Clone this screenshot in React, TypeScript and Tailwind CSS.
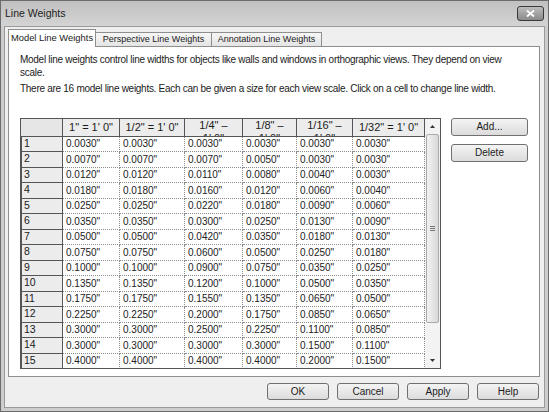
import React from "react";

const cols = [
  { w: "w-[57px]", label: ['1" = 1\' 0"'] },
  { w: "w-[65px]", label: ['1/2" = 1\' 0"'] },
  { w: "w-[58px]", label: ['1/4" –', '1\' 0"'] },
  { w: "w-[54px]", label: ['1/8" –', '1\' 0"'] },
  { w: "w-[56px]", label: ['1/16" –', '1\' 0"'] },
  { w: "w-[72px]", label: ['1/32" = 1\' 0"'] },
];

const rows = [
  ["0.0030", "0.0030", "0.0030", "0.0030", "0.0030", "0.0030"],
  ["0.0070", "0.0070", "0.0070", "0.0050", "0.0030", "0.0030"],
  ["0.0120", "0.0120", "0.0110", "0.0080", "0.0040", "0.0030"],
  ["0.0180", "0.0180", "0.0160", "0.0120", "0.0060", "0.0040"],
  ["0.0250", "0.0250", "0.0220", "0.0180", "0.0090", "0.0060"],
  ["0.0350", "0.0350", "0.0300", "0.0250", "0.0130", "0.0090"],
  ["0.0500", "0.0500", "0.0420", "0.0350", "0.0180", "0.0130"],
  ["0.0750", "0.0750", "0.0600", "0.0500", "0.0250", "0.0180"],
  ["0.1000", "0.1000", "0.0900", "0.0750", "0.0350", "0.0250"],
  ["0.1350", "0.1350", "0.1200", "0.1000", "0.0500", "0.0350"],
  ["0.1750", "0.1750", "0.1550", "0.1350", "0.0650", "0.0500"],
  ["0.2250", "0.2250", "0.2000", "0.1750", "0.0850", "0.0650"],
  ["0.3000", "0.3000", "0.2500", "0.2250", "0.1100", "0.0850"],
  ["0.3000", "0.3000", "0.3000", "0.3000", "0.1500", "0.1100"],
  ["0.4000", "0.4000", "0.4000", "0.4000", "0.2000", "0.1500"],
];

function Btn({ children, className = "" }: { children: React.ReactNode; className?: string }) {
  return (
    <button
      className={
        "flex items-center justify-center rounded-[3px] border border-[#707070] bg-gradient-to-b from-[#f4f4f4] to-[#dcdcdc] text-[10px] text-[#1b1b1b] " +
        className
      }
    >
      {children}
    </button>
  );
}

export default function App() {
  return (
    <div className="flex h-[412px] w-[549px] flex-col border border-[#6b6b6b] bg-[#cdcdcd] font-['Liberation_Sans',Arial,sans-serif] text-[#1b1b1b]">
      {/* title bar */}
      <div className="flex h-[25px] items-center justify-between bg-gradient-to-b from-[#c0c0c0] to-[#d4d4d4] pl-[4px] pr-[4px]">
        <span className="text-[10.5px] text-[#222]">Line Weights</span>
        <button className="flex h-[15px] w-[27px] items-center justify-center rounded-[3px] border border-[#3a3a3a] bg-gradient-to-b from-[#bdbdbd] to-[#8a8a8a]">
          <svg width="9" height="7" viewBox="0 0 9 7">
            <path d="M1 0.5 L8 6.5 M8 0.5 L1 6.5" stroke="#fff" strokeWidth="1.8" />
          </svg>
        </button>
      </div>

      {/* client area */}
      <div className="mx-[3px] mb-[3px] flex flex-1 flex-col border border-[#9a9a9a] bg-[#efefef] pl-[3px] pr-[4px] pt-[2px]">
        {/* tabs */}
        <div className="relative z-10 -mb-px flex h-[18px] items-end whitespace-nowrap text-[9px]">
          <div className="flex h-[18px] w-[88px] items-center justify-center border border-b-0 border-[#8e8e8e] bg-white text-[9.4px]">
            Model Line Weights
          </div>
          <div className="mb-px flex h-[14px] w-[116px] items-center justify-center border border-b-0 border-l-0 border-[#8e8e8e] bg-gradient-to-b from-[#f6f6f6] to-[#e4e4e4]">
            Perspective Line Weights
          </div>
          <div className="mb-px flex h-[14px] w-[110px] items-center justify-center border border-b-0 border-l-0 border-[#8e8e8e] bg-gradient-to-b from-[#f6f6f6] to-[#e4e4e4]">
            Annotation Line Weights
          </div>
        </div>

        {/* panel */}
        <div className="flex h-[331px] flex-col border border-[#8e8e8e] bg-white pl-[11px] pt-[6px]">
          <p className="w-[500px] text-[10px] leading-[13px] tracking-[-0.28px]">
            Model line weights control line widths for objects like walls and windows in orthographic views. They depend on view scale.
          </p>
          <p className="mt-[3px] text-[10px] leading-[13px] tracking-[-0.28px]">
            There are 16 model line weights. Each can be given a size for each view scale. Click on a cell to change line width.
          </p>

          <div className="mt-[22.5px] flex gap-[10px]">
            {/* table */}
            <div className="flex h-[251px] w-[421px] border border-[#555] bg-white">
              <div className="flex w-[404px] flex-col overflow-hidden">
                <div className="flex h-[18px] shrink-0 overflow-hidden border-b border-[#555] bg-[#ececec]">
                  <div className="w-[42px] shrink-0 border-r border-[#555] bg-[#e6e6e6]" />
                  {cols.map((c, i) => (
                    <div
                      key={i}
                      className={`${c.w} flex h-[17px] shrink-0 flex-col items-center overflow-hidden border-r border-[#555] text-[11px] leading-[13px] ${
                        c.label.length > 1 ? "justify-start" : "justify-center"
                      }`}
                    >
                      {c.label.map((l, j) => (
                        <span key={j} className="whitespace-nowrap">
                          {l}
                        </span>
                      ))}
                    </div>
                  ))}
                </div>
                {rows.map((r, i) => (
                  <div key={i} className="flex h-[15.5px] shrink-0">
                    <div className="flex w-[42px] shrink-0 items-center border-b border-l border-r border-[#555] bg-[#ececec] pl-[2px] text-[10.5px]">
                      {i + 1}
                    </div>
                    {r.map((v, j) => (
                      <div
                        key={j}
                        className={`${cols[j].w} flex shrink-0 items-center border-b border-r border-dotted border-[#8c8c8c] pl-[3px] text-[10px] text-[#222]`}
                      >
                        {v}"
                      </div>
                    ))}
                  </div>
                ))}
              </div>

              {/* scrollbar */}
              <div className="flex w-[15px] flex-col bg-[#f3f3f3]">
                <div className="flex h-[15px] items-center justify-center">
                  <svg width="5" height="3" viewBox="0 0 5 3">
                    <polygon points="2.5,0 5,3 0,3" fill="#333" />
                  </svg>
                </div>
                <div className="mx-[1px] flex h-[189px] items-center justify-center rounded-[2px] border border-[#a9a9a9] bg-gradient-to-r from-[#f2f2f2] to-[#d9d9d9]">
                  <div className="flex flex-col gap-[1px]">
                    <div className="h-px w-[5px] bg-[#777]" />
                    <div className="h-px w-[5px] bg-[#777]" />
                    <div className="h-px w-[5px] bg-[#777]" />
                  </div>
                </div>
                <div className="flex-1" />
                <div className="flex h-[15px] items-center justify-center">
                  <svg width="5" height="3" viewBox="0 0 5 3">
                    <polygon points="0,0 5,0 2.5,3" fill="#333" />
                  </svg>
                </div>
              </div>
            </div>

            {/* side buttons */}
            <div className="flex w-[77px] flex-col gap-[8px]">
              <Btn className="h-[18px] w-[77px]">Add...</Btn>
              <Btn className="h-[18px] w-[77px]">Delete</Btn>
            </div>
          </div>
        </div>

        {/* bottom buttons */}
        <div className="mr-[1px] mt-[6px] flex justify-end gap-[8px]">
          <Btn className="h-[17px] w-[62px]">OK</Btn>
          <Btn className="h-[17px] w-[62px]">Cancel</Btn>
          <Btn className="h-[17px] w-[62px]">Apply</Btn>
          <Btn className="h-[17px] w-[62px]">Help</Btn>
        </div>
      </div>
    </div>
  );
}
